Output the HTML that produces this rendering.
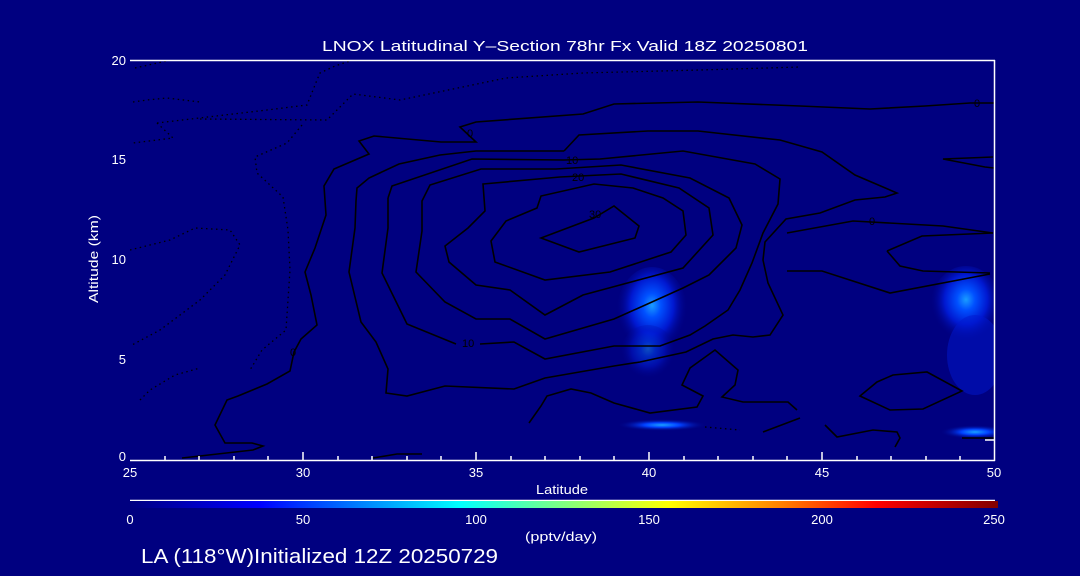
<!DOCTYPE html>
<html><head><meta charset="utf-8"><style>
html,body{margin:0;padding:0;background:#000080;}
svg{display:block}
text{font-family:"Liberation Sans",sans-serif;fill:#fff}
</style></head><body>
<svg width="1080" height="576" viewBox="0 0 1080 576" xmlns="http://www.w3.org/2000/svg">
<defs>
<radialGradient id="b1" cx="50%" cy="40%" r="50%">
<stop offset="0" stop-color="#1a9cff"/><stop offset="0.25" stop-color="#0050ff"/><stop offset="0.6" stop-color="#0018d0"/><stop offset="1" stop-color="#000080" stop-opacity="0"/>
</radialGradient>
<radialGradient id="b2" cx="50%" cy="50%" r="50%">
<stop offset="0" stop-color="#1aa0ff"/><stop offset="0.4" stop-color="#0040ff"/><stop offset="1" stop-color="#000080" stop-opacity="0"/>
</radialGradient>
<linearGradient id="cb" x1="0" x2="1" y1="0" y2="0">
<stop offset="0" stop-color="#000080"/><stop offset="0.15" stop-color="#0000ff"/><stop offset="0.38" stop-color="#00ffff"/><stop offset="0.5" stop-color="#80ff80"/><stop offset="0.62" stop-color="#ffff00"/><stop offset="0.75" stop-color="#ff8000"/><stop offset="0.86" stop-color="#ff0000"/><stop offset="1" stop-color="#800000"/>
</linearGradient>
<clipPath id="pc"><rect x="130" y="60" width="864" height="400"/></clipPath>
</defs>

<g clip-path="url(#pc)">
<ellipse cx="652" cy="315" rx="36" ry="48" fill="url(#b1)"/>
<ellipse cx="648" cy="355" rx="28" ry="30" fill="url(#b1)" opacity="0.5"/>
<ellipse cx="966" cy="308" rx="36" ry="42" fill="url(#b1)"/>
<ellipse cx="975" cy="355" rx="28" ry="40" fill="#0018d0" opacity="0.5"/>
<ellipse cx="662" cy="425" rx="45" ry="6" fill="url(#b2)"/>
<ellipse cx="975" cy="432" rx="35" ry="7" fill="url(#b2)"/>

<g fill="none" stroke="#000" stroke-width="1.6">
<polyline points="182,458 253,450 263,446 252,443 225,443 215,425 227,400 238,396 267,384 290,371 294,352 301,339 317,325 311,295 305,272 315,248 326,215 324,186 334,169 369,154 359,141 374,136 441,142 476,142 460,127 476,122 583,114 614,104 698,102 800,106 870,109 925,106 970,103 994,103"/>
<polyline points="373,458 397,454 422,454"/>
<polyline points="564,151 579,135 648,131 698,131 780,140 822,152 855,175 897,193 885,197 855,200 820,213 786,219 765,242 763,260 768,283 783,315 770,335 753,337 733,335 713,339 686,352 640,362 614,366 545,378 514,389 445,386 407,396 386,393 388,369 376,342 361,322 349,272 355,228 356,201 357,188 369,178 399,164 440,155 476,151 564,151"/>
<polyline points="388,198 392,186 472,159 564,160 600,159 683,151 755,164 780,179 778,204 763,233 752,263 740,290 728,310 705,326 690,335 660,346 614,346 545,359 514,342 480,344"/>
<path d="M456,344 L407,324 L382,273 L388,228 L388,198"/>
<polygon points="422,201 430,185 481,169 556,169 621,165 690,178 729,198 742,225 736,248 709,275 683,288 614,319 545,339 510,319 476,319 445,302 416,272 422,231"/>
<polygon points="483,184 560,177 600,175 621,174 679,188 709,208 713,235 683,268 583,295 545,315 510,290 476,285 449,262 445,246 468,228 485,211"/>
<polygon points="537,208 541,196 594,184 633,188 663,198 683,211 686,235 671,252 610,272 545,280 495,262 491,241 506,221"/>
<polygon points="541,238 594,218 614,206 639,226 635,238 579,252"/>
<polyline points="529,423 541,406 547,396 571,389 591,393 614,403 650,413 697,407 703,396 682,385 690,368 715,350 738,370 735,385 722,397 743,402 788,402 797,410"/>
<polyline points="763,432 800,418"/>
<polyline points="825,425 837,437 873,430 897,432 900,438 895,447"/>
<polygon points="860,396 877,382 893,375 927,372 962,391 923,409 890,410"/>
<polyline points="787,271 822,271 890,293 990,274"/>
<polyline points="787,233 853,221 943,226 993,233"/>
<polyline points="887,251 922,236 993,233"/>
<polyline points="887,251 900,266 923,271 990,273"/>
<polyline points="993,157 943,159 985,167 994,168"/>
<polyline points="962,438 994,438"/>
</g>

<g fill="none" stroke="#000" stroke-width="1.3" stroke-dasharray="1.5 3.5">
<polyline points="135,68 180,58"/>
<polyline points="133,102 147,100 167,98 200,102"/>
<polyline points="157,123 267,110 307,105 317,80 320,73 335,66 353,60"/>
<polyline points="157,123 173,138 133,143"/>
<polyline points="200,119 327,120 353,94 400,100 506,78 583,73 700,70 800,67"/>
<polyline points="302,125 287,143 255,157 257,173 283,197 288,230 290,270 286,330 262,350 250,370"/>
<polyline points="130,250 170,240 195,228 230,230 240,245 225,275 200,300 160,330 132,345"/>
<polyline points="140,400 150,390 175,375 200,368"/>
<polyline points="705,427 740,430"/>
</g>
<g font-size="11">
<text x="467" y="137" style="fill:#000">0</text>
<text x="566" y="164" style="fill:#000">10</text>
<text x="572" y="181" style="fill:#000">20</text>
<text x="589" y="218" style="fill:#000">30</text>
<text x="462" y="347" style="fill:#000">10</text>
<text x="869" y="225" style="fill:#000">0</text>
<text x="974" y="107" style="fill:#000">0</text>
<text x="290" y="356" style="fill:#000">0</text>
</g>
</g>

<g stroke="#fff" stroke-width="1.5" fill="none">
<line x1="130" y1="60.5" x2="995" y2="60.5"/>
<line x1="130" y1="460.5" x2="995" y2="460.5"/>
<line x1="994.5" y1="60" x2="994.5" y2="461"/>
<line x1="130" y1="500.5" x2="995" y2="500.5"/>
<line x1="985" y1="440" x2="994" y2="440"/>
<path d="M165,460v-4M199,460v-4M234,460v-4M268,460v-4M303,460v-8M338,460v-4M372,460v-4M407,460v-4M441,460v-4M476,460v-8M511,460v-4M545,460v-4M580,460v-4M614,460v-4M649,460v-8M684,460v-4M718,460v-4M753,460v-4M787,460v-4M822,460v-8M857,460v-4M891,460v-4M926,460v-4M960,460v-4"/>
</g>
<rect x="130" y="501" width="868" height="7" fill="url(#cb)"/>

<g font-size="13">
<text x="322" y="51" font-size="15" textLength="486" lengthAdjust="spacingAndGlyphs">LNOX Latitudinal Y–Section 78hr  Fx Valid 18Z 20250801</text>
<text x="126" y="65" text-anchor="end">20</text>
<text x="126" y="164" text-anchor="end">15</text>
<text x="126" y="264" text-anchor="end">10</text>
<text x="126" y="364" text-anchor="end">5</text>
<text x="126" y="461" text-anchor="end">0</text>
<text x="130" y="477" text-anchor="middle">25</text>
<text x="303" y="477" text-anchor="middle">30</text>
<text x="476" y="477" text-anchor="middle">35</text>
<text x="649" y="477" text-anchor="middle">40</text>
<text x="822" y="477" text-anchor="middle">45</text>
<text x="994" y="477" text-anchor="middle">50</text>
<text x="536" y="494" textLength="52" lengthAdjust="spacingAndGlyphs">Latitude</text>
<text transform="translate(98,303) rotate(-90)" textLength="88" lengthAdjust="spacingAndGlyphs">Altitude (km)</text>
<text x="130" y="524" text-anchor="middle">0</text>
<text x="303" y="524" text-anchor="middle">50</text>
<text x="476" y="524" text-anchor="middle">100</text>
<text x="649" y="524" text-anchor="middle">150</text>
<text x="822" y="524" text-anchor="middle">200</text>
<text x="994" y="524" text-anchor="middle">250</text>
<text x="525" y="541" textLength="72" lengthAdjust="spacingAndGlyphs">(pptv/day)</text>
<text x="141" y="563" font-size="20" textLength="357" lengthAdjust="spacingAndGlyphs">LA (118°W)Initialized 12Z 20250729</text>
</g>
</svg>
</body></html>
